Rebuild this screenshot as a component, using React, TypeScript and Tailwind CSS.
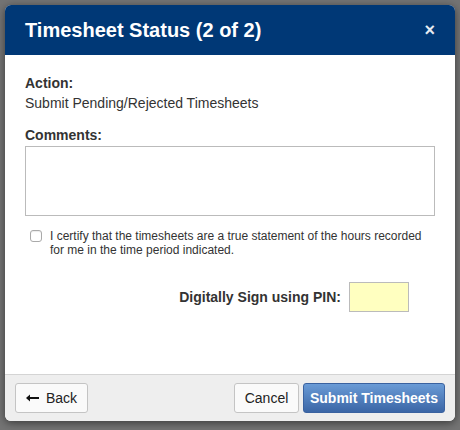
export default function App() {
  return (
    <div className="w-[460px] h-[430px] bg-[#747474] p-[5px] font-['Liberation_Sans',Arial,sans-serif]">
      <div className="w-[450px] h-[416px] flex flex-col rounded-[6px] overflow-hidden bg-white shadow-[0_2px_8px_rgba(0,0,0,0.5)]">
        {/* Header */}
        <div className="h-[50px] shrink-0 bg-[#003876] pl-[20px] pr-[20px] flex items-center justify-between">
          <h1 className="text-[20px] font-bold text-white leading-none">Timesheet Status (2 of 2)</h1>
          <span className="text-white text-[18px] font-bold leading-none opacity-90">×</span>
        </div>

        {/* Body */}
        <div className="flex-1 px-[20px] pt-[18px] text-[#333] text-[14px]">
          <div className="font-bold leading-[20px]">Action:</div>
          <div className="leading-[20px]">Submit Pending/Rejected Timesheets</div>

          <div className="font-bold leading-[20px] mt-[12px]">Comments:</div>
          <textarea className="mt-[1px] block w-[410px] h-[70px] border border-[#bbb] resize-none outline-none" />

          <label className="flex items-start gap-[8px] mt-[13px] pl-[5px] text-[12px] leading-[14px] text-[#333]">
            <span className="mt-[1px] w-[12px] h-[12px] shrink-0 rounded-[3px] border border-[#aaa] bg-white shadow-[inset_0_1px_1px_rgba(0,0,0,0.08)]" />
            <span>I certify that the timesheets are a true statement of the hours recorded for me in the time period indicated.</span>
          </label>

          <div className="flex items-center justify-end gap-[8px] mt-[25px] pr-[26px]">
            <span className="font-bold">Digitally Sign using PIN:</span>
            <input className="w-[60px] h-[30px] bg-[#ffffc0] border border-[#bbb] outline-none" />
          </div>
        </div>

        {/* Footer */}
        <div className="h-[47px] shrink-0 bg-[#eeeeee] border-t border-[#d4d4d4] px-[10px] flex items-center justify-between">
          <button className="h-[30px] w-[73px] flex items-center justify-center gap-[6px] bg-[#fafafa] border border-[#c4c4c4] rounded-[3px] text-[14px] text-[#222]">
            <svg width="14" height="8" viewBox="0 0 14 8">
              <path d="M1 4 L13 4" stroke="#111" strokeWidth="2" />
              <path d="M0 4 L4 0.5 L4 7.5 Z" fill="#111" />
            </svg>
            Back
          </button>
          <div className="flex items-center gap-[4px]">
            <button className="h-[30px] w-[65px] bg-[#fafafa] border border-[#c4c4c4] rounded-[3px] text-[14px] text-[#222]">Cancel</button>
            <button className="h-[30px] w-[142px] bg-gradient-to-b from-[#6a9bd6] to-[#3b66a6] border border-[#3a62a0] rounded-[3px] text-[14px] font-bold text-white">Submit Timesheets</button>
          </div>
        </div>
      </div>
    </div>
  )
}
